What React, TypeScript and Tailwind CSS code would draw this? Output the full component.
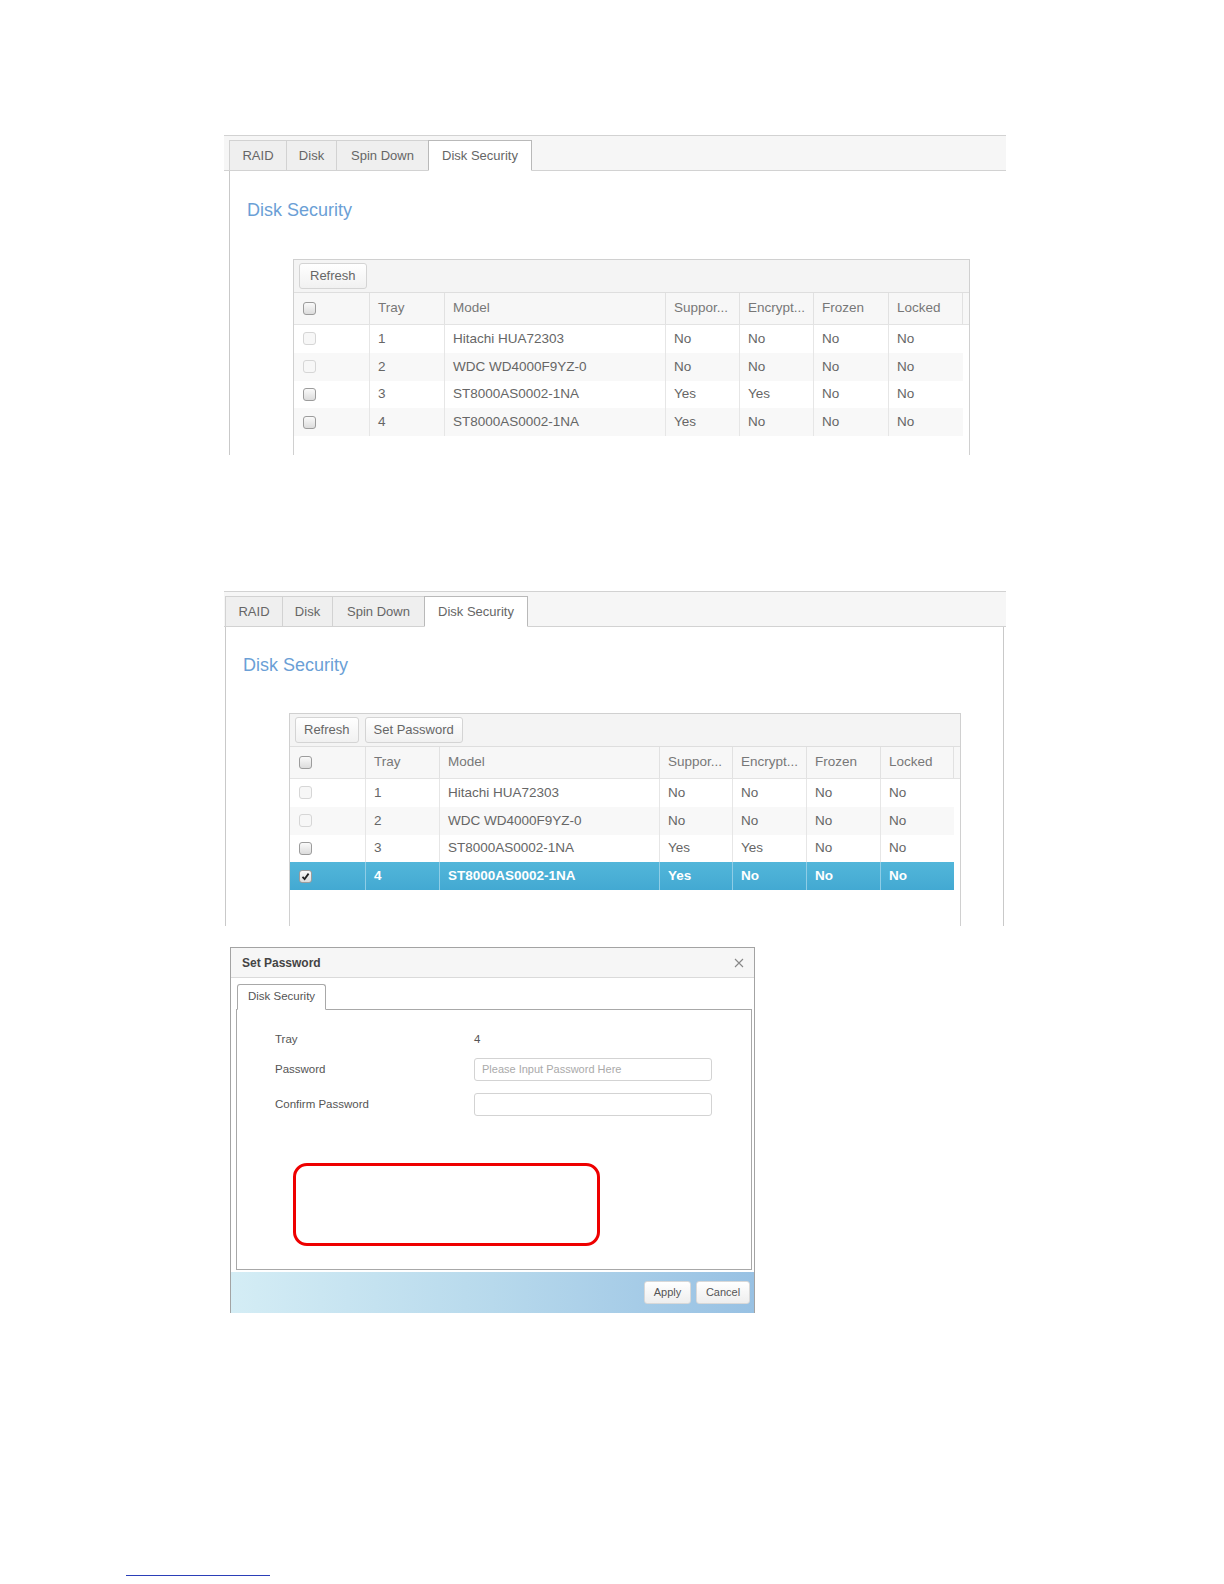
import React from 'react';

type Row = { tray: string; model: string; sup: string; enc: string; frozen: string; locked: string; enabled: boolean };

const rows: Row[] = [
  { tray: '1', model: 'Hitachi HUA72303', sup: 'No', enc: 'No', frozen: 'No', locked: 'No', enabled: false },
  { tray: '2', model: 'WDC WD4000F9YZ-0', sup: 'No', enc: 'No', frozen: 'No', locked: 'No', enabled: false },
  { tray: '3', model: 'ST8000AS0002-1NA', sup: 'Yes', enc: 'Yes', frozen: 'No', locked: 'No', enabled: true },
  { tray: '4', model: 'ST8000AS0002-1NA', sup: 'Yes', enc: 'No', frozen: 'No', locked: 'No', enabled: true },
];

function Checkbox({ disabled, checked }: { disabled?: boolean; checked?: boolean }) {
  return (
    <span
      className={`inline-flex items-center justify-center w-[13px] h-[13px] rounded-[3px] border ${
        disabled ? 'border-[#d6d6d6] bg-[#f7f7f7]' : 'border-[#9c9c9c] bg-gradient-to-b from-[#fafafa] to-[#dcdcdc]'
      }`}
    >
      {checked && (
        <svg width="9" height="9" viewBox="0 0 9 9">
          <path d="M1.5 4.8 L3.6 7 L7.6 1.6" fill="none" stroke="#222" strokeWidth="1.8" />
        </svg>
      )}
    </span>
  );
}

function Tabs({ wide }: { wide?: boolean }) {
  const tab = 'h-[31px] flex items-center justify-center border border-[#d2d2d2] bg-[#efefef] text-[13px] text-[#666] -ml-px first:ml-0';
  return (
    <div className={`h-[36px] border-t border-b border-[#d2d2d2] bg-[#f6f6f6] flex items-end ${wide ? 'pl-px' : 'pl-[5px]'}`}>
      <div className="flex items-end -mb-px">
        <div className={`${tab} w-[58px]`}>RAID</div>
        <div className={`${tab} w-[51px]`}>Disk</div>
        <div className={`${tab} w-[93px]`}>Spin Down</div>
        <div className="h-[31px] w-[104px] -ml-px flex items-center justify-center border border-[#b9b9b9] border-b-white bg-white text-[13px] text-[#666]">
          Disk Security
        </div>
      </div>
    </div>
  );
}

function Grid({ selected, setPassword }: { selected?: boolean; setPassword?: boolean }) {
  const cols = setPassword
    ? 'grid grid-cols-[76px_74px_220px_73px_74px_74px_73px_1fr]'
    : 'grid grid-cols-[76px_75px_221px_74px_74px_75px_74px_1fr]';
  const hcell = 'h-[31px] flex items-center pl-[8px] border-r border-[#e1e1e1] text-[13.5px] text-[#777] truncate';
  const btn = `h-[26px] ${setPassword ? 'px-[8px]' : 'px-[10px]'} border border-[#d4d4d4] rounded-[3px] bg-gradient-to-b from-white to-[#f1f1f1] text-[13px] text-[#666]`;
  return (
    <div className={`border border-b-0 border-[#d0d0d0] h-full ${setPassword ? 'w-[672px]' : 'w-[677px]'}`}>
      <div className="h-[33px] bg-[#f4f4f4] border-b border-[#dedede] flex items-center gap-[6px] px-[5px]">
        <button className={btn}>Refresh</button>
        {setPassword && <button className={btn}>Set Password</button>}
      </div>
      <div className={`${cols} bg-[#f7f7f7] border-b border-[#e3e3e3]`}>
        <div className={hcell}>
          <span className="pl-[1px] flex">
            <Checkbox />
          </span>
        </div>
        <div className={hcell}>Tray</div>
        <div className={hcell}>Model</div>
        <div className={hcell}>Suppor...</div>
        <div className={hcell}>Encrypt...</div>
        <div className={hcell}>Frozen</div>
        <div className={hcell}>Locked</div>
        <div className="h-[31px]" />
      </div>
      {rows.map((r, i) => {
        const sel = selected && i === 3;
        const rowBg = sel ? 'bg-gradient-to-b from-[#52b6da] to-[#43a9d2]' : i % 2 === 1 ? 'bg-[#f8f8f8]' : 'bg-white';
        const cell = `h-[27.75px] flex items-center pl-[8px] border-r text-[13.5px] ${
          sel ? 'border-[#8fcde6] text-white font-bold' : 'border-[#e6e6e6] text-[#666]'
        }`;
        return (
          <div key={r.tray} className={cols}>
            <div className={`${cell} ${rowBg}`}>
              <span className="pl-[1px] flex">
                <Checkbox disabled={!r.enabled} checked={sel} />
              </span>
            </div>
            <div className={`${cell} ${rowBg}`}>{r.tray}</div>
            <div className={`${cell} ${rowBg}`}>{r.model}</div>
            <div className={`${cell} ${rowBg}`}>{r.sup}</div>
            <div className={`${cell} ${rowBg}`}>{r.enc}</div>
            <div className={`${cell} ${rowBg}`}>{r.frozen}</div>
            <div className={`${cell} ${rowBg} border-r-0`}>{r.locked}</div>
            <div className="bg-white" />
          </div>
        );
      })}
    </div>
  );
}

function Shot({ second }: { second?: boolean }) {
  return (
    <div className="ml-[224px] w-[782px]">
      <Tabs wide={second} />
      <div
        className={
          second
            ? 'ml-px mr-[2px] h-[299px] border-l border-r border-[#c9c9c9] flex flex-col'
            : 'ml-[5px] h-[284px] border-l border-[#c9c9c9] flex flex-col'
        }
      >
        <h2 className={`${second ? 'mt-[27px]' : 'mt-[28px]'} ml-[17px] text-[18px] leading-[22px] text-[#6b9fd6]`}>
          Disk Security
        </h2>
        <div className={`flex-1 ${second ? 'mt-[37px] ml-[63px]' : 'mt-[38px] ml-[63px]'}`}>
          <Grid selected={second} setPassword={second} />
        </div>
      </div>
    </div>
  );
}

function Dialog() {
  const label = 'w-[199px] text-[11.5px] text-[#555]';
  const btn = 'h-[23px] rounded-[3px] border border-[#d8d8d8] bg-gradient-to-b from-white to-[#eeeeee] text-[11px] text-[#555]';
  return (
    <div className="mt-[21px] ml-[230px] w-[525px] border border-b-0 border-[#a3a3a3] bg-white flex flex-col">
      <div className="h-[30px] bg-[#f6f6f6] border-b border-[#dadada] flex items-center justify-between pl-[11px] pr-[10px]">
        <span className="text-[12px] font-bold text-[#444]">Set Password</span>
        <svg width="10" height="10" viewBox="0 0 10 10">
          <path d="M1 1 L9 9 M9 1 L1 9" stroke="#888" strokeWidth="1.1" />
        </svg>
      </div>
      <div className="pt-[6px] pl-[5px] pr-[2px]">
        <div className="flex -mb-px">
          <div className="ml-px h-[26px] w-[89px] flex items-center pl-[10px] border border-[#a8a8a8] border-b-white rounded-t-[3px] bg-white text-[11.5px] text-[#555]">
            Disk Security
          </div>
        </div>
        <div className="h-[261px] border border-[#a8a8a8] pl-[38px] pt-[22px]">
          <div className="flex items-center h-[16px]">
            <span className={label}>Tray</span>
            <span className="text-[11.5px] text-[#555]">4</span>
          </div>
          <div className="flex items-center mt-[10px]">
            <span className={label}>Password</span>
            <div className="w-[238px] h-[23px] border border-[#d3d3d3] rounded-[3px] flex items-center pl-[7px] text-[11px] text-[#aaa]">
              Please Input Password Here
            </div>
          </div>
          <div className="flex items-center mt-[12px]">
            <span className={label}>Confirm Password</span>
            <div className="w-[238px] h-[23px] border border-[#d3d3d3] rounded-[3px]" />
          </div>
          <div className="mt-[47px] ml-[18px] w-[307px] h-[83px] border-[3px] border-[#ee0000] rounded-[14px]" />
        </div>
      </div>
      <div className="mt-[2px] h-[41px] bg-gradient-to-r from-[#d4edf5] via-[#b7d9ec] to-[#98c1e3] flex items-center justify-end gap-[5px] pr-[4px]">
        <button className={`${btn} w-[47px]`}>Apply</button>
        <button className={`${btn} w-[54px]`}>Cancel</button>
      </div>
    </div>
  );
}

export default function App() {
  return (
    <div className="w-[1224px] h-[1584px] overflow-hidden bg-white pt-[135px] font-['Liberation_Sans',Arial,sans-serif]">
      <Shot />
      <div className="h-[136px]" />
      <Shot second />
      <Dialog />
      <div className="mt-[262px] ml-[126px] w-[144px] h-px bg-[#2b3fb8]" />
    </div>
  );
}
